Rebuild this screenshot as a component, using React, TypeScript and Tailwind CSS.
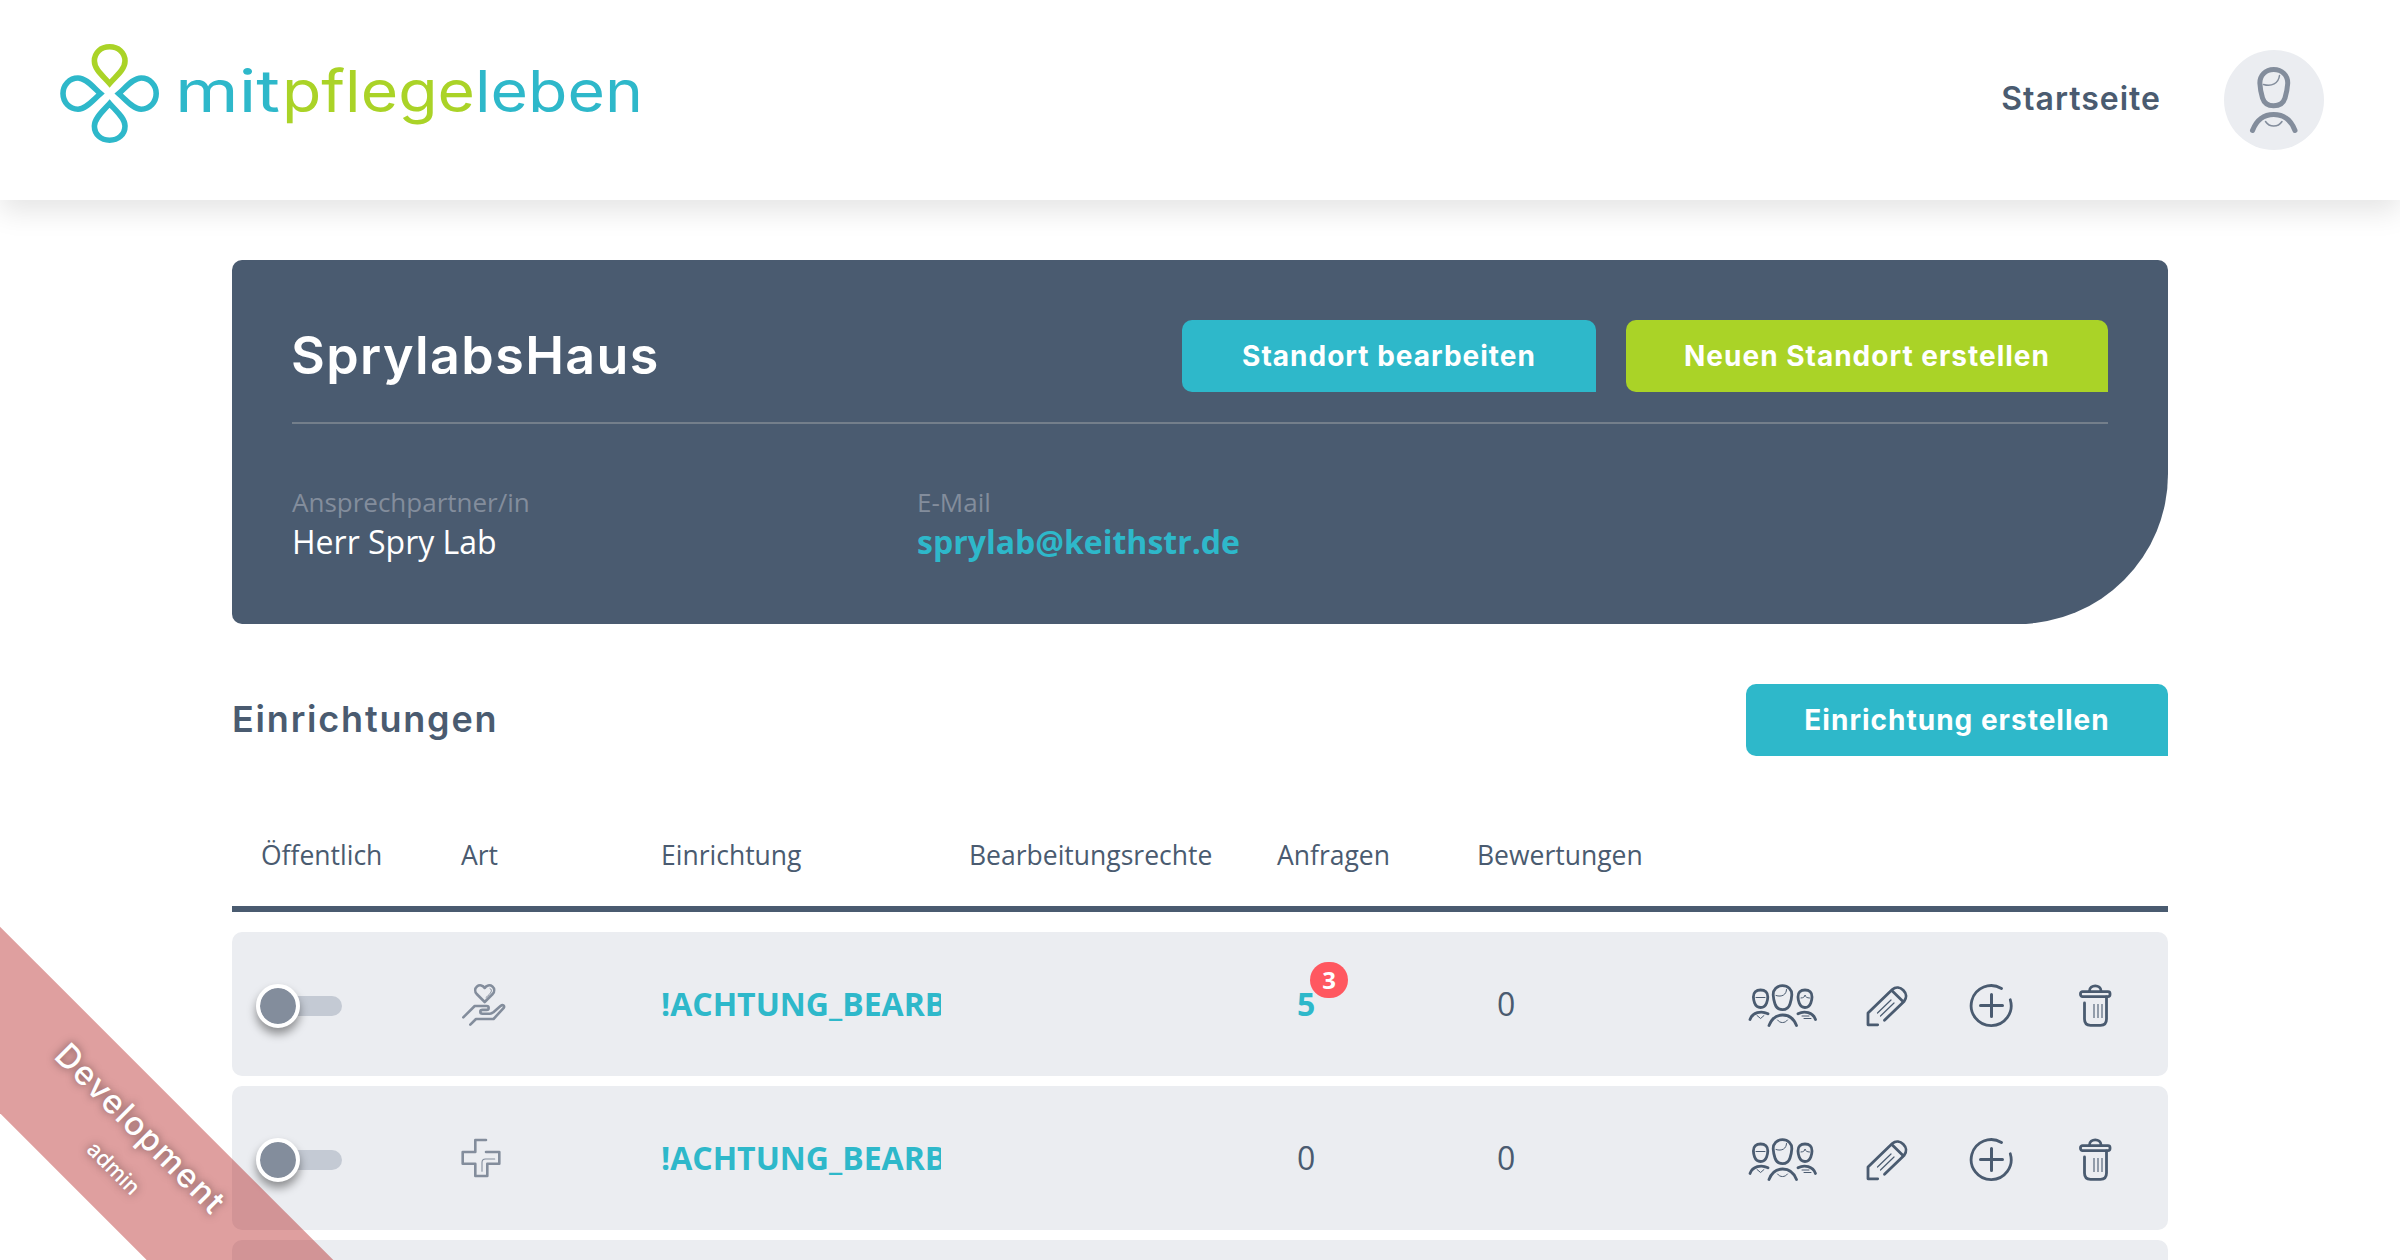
import React from "react";

const NAV = "#4a5b70";
const GREY = "#838d9c";
const TEAL = "#2eb8ca";
const LIME = "#aad327";

function Logo() {
  return (
    <svg width="600" height="110" viewBox="60 40 600 110" className="block">
      <g fill="none" strokeWidth="5.6" strokeLinejoin="miter">
        <path
          stroke={LIME}
          d="M109.6 83.5 C103 76 94.400 69.500 94.400 61 C94.400 52.500 101 46.800 109.600 46.800 C118.200 46.800 125 52.500 125 61 C125 69.500 116 76 109.600 83.500 Z"
        />
        <path
          stroke={TEAL}
          d="M109.6 103.600 C103 111 94.400 118 94.400 126 C94.400 134.500 101 140.200 109.600 140.200 C118.200 140.200 125 134.500 125 126 C125 118 116 111 109.600 103.600 Z"
        />
        <path
          stroke={TEAL}
          d="M100.500 93.600 C93 87 86 78 78 78 C69.500 78 63 85 63 93.600 C63 102.200 69.500 109.200 78 109.200 C86 109.200 93 100.200 100.500 93.600 Z"
        />
        <path
          stroke={TEAL}
          d="M118.700 93.600 C126.200 87 133.200 78 141.200 78 C149.700 78 156.200 85 156.200 93.600 C156.200 102.200 149.700 109.200 141.200 109.200 C133.200 109.200 126.200 100.200 118.700 93.600 Z"
        />
      </g>
      <g fontFamily="Inter, sans-serif" fontSize="58" fontWeight="400">
        <text x="175" y="111.500" textLength="105" lengthAdjust="spacingAndGlyphs" fill={TEAL}>mit</text>
        <text x="282" y="111.500" textLength="193" lengthAdjust="spacingAndGlyphs" fill={LIME}>pflege</text>
        <text x="475" y="111.500" textLength="168" lengthAdjust="spacingAndGlyphs" fill={TEAL}>leben</text>
      </g>
    </svg>
  );
}

function AvatarIcon() {
  return (
    <svg width="100" height="100" viewBox="0 0 100 100" fill="none" stroke={GREY} strokeLinecap="round">
      <g strokeWidth="5">
        <path d="M49.700 19.500 C58 19.500 64 25.500 63.700 33.500 C63.400 39 62.300 43.500 61 48 C59.300 53.500 55.500 55.800 49.700 55.800 C44 55.800 40.200 53.500 38.500 48 C37.200 43.500 36.100 39 35.900 33.500 C35.600 25.500 41.500 19.500 49.700 19.500 Z" />
        <path d="M28.500 80.500 C32 71.500 39 64.500 49.700 64.500 C60.500 64.500 67.500 71.500 71 80.500" />
      </g>
      <path strokeWidth="1.500" d="M39.500 34.500 C47.500 37 54.500 33.500 55.500 25.500" />
      <path strokeWidth="1.500" d="M41.500 71.500 C45.500 77.500 54 77.500 58 71.500" />
    </svg>
  );
}

function CareHandIcon() {
  return (
    <svg width="46" height="46" viewBox="0 0 46 46" fill="none" stroke={GREY} strokeLinecap="round" strokeLinejoin="round">
      <g strokeWidth="2.600">
        <path d="M23.700 21 L15.700 13 C13.600 10.500 13.800 7.300 16 5.400 C18.500 3.400 22 4.200 23.700 7 C25.400 4.200 28.900 3.400 31.400 5.400 C33.600 7.300 33.800 10.500 31.700 13 Z" />
        <path d="M2.300 36.300 L13.700 25 H25.700 C28.300 25 28.300 28.900 25.700 28.900 H21.500 C18.600 28.900 18.600 32.800 21.500 32.800 H29 C30.800 32.800 31.500 32 32.700 31 L39.500 25 C42 23 44.300 25 42.500 27.200 L32.500 38 H15 L9.300 43.700" />
      </g>
      <path strokeWidth="1" d="M29 7.500 C32 9 30.500 12 25 16.500" />
    </svg>
  );
}

function CrossIcon() {
  return (
    <svg width="46" height="46" viewBox="0 0 46 46" fill="none" stroke={GREY} strokeLinecap="round" strokeLinejoin="round">
      <path strokeWidth="2.600" d="M25 5 H14.300 V17 H1.700 V28.700 H14.300 V41 H26.300 V28.700 H38.300 V17 H25" />
      <path strokeWidth="1.100" d="M33.700 24 H24.500 Q21 24 21 27.500 V36.300" />
    </svg>
  );
}

function GroupIcon() {
  return (
    <svg width="70" height="46" viewBox="0 0 70 46" fill="none" stroke={NAV} strokeLinecap="round" strokeLinejoin="round">
      <g strokeWidth="2.800">
        <path d="M34.500 2.700 C40 2.700 44 6.500 43.800 12 C43.600 15.500 43 18 42 21 C40.800 24.800 38.500 26.700 34.500 26.700 C30.500 26.700 28.200 24.800 27 21 C26 18 25.400 15.500 25.200 12 C25 6.500 29 2.700 34.500 2.700 Z" />
        <path d="M21 42.500 C23.500 36 28 32 34.700 32 C41.500 32 46 36 48.500 42.500" />
        <path d="M12.600 7 C17 7 20 9.500 19.800 14 C19.700 16.500 19.300 18.200 18.600 20 C17.500 23 15.800 24.500 12.600 24.500 C9.400 24.500 7.700 23 6.600 20 C5.900 18.200 5.500 16.500 5.400 14 C5.200 9.500 8.200 7 12.600 7 Z" />
        <path d="M57 7 C61.400 7 64.200 9.500 64 14 C63.900 16.500 63.500 18.200 62.800 20 C61.700 23 60.200 24.500 57 24.500 C53.800 24.500 52.300 23 51.200 20 C50.500 18.200 50.100 16.500 50 14 C49.800 9.500 52.600 7 57 7 Z" />
        <path d="M2 36.500 C4.500 29.500 13 27.300 20 30.800" />
        <path d="M50 30.800 C56.500 27.300 65 29.500 67.500 36.500" />
      </g>
      <g strokeWidth="1">
        <path d="M28 12.500 C34 14.500 38.500 11.500 38.500 6.500 M29.500 37 C32 40.500 37 40.500 39.500 37" />
        <path d="M8 14.500 H17 M9 32.500 L12.600 35.500 L16 32.500" />
        <path d="M53 15 C55.500 15 57 13.500 57 12 C57.500 14 59 15 61.500 15 M54 33 H61 M56 35.500 H63" />
      </g>
    </svg>
  );
}

function PencilIcon() {
  return (
    <svg width="46" height="46" viewBox="0 0 46 46" fill="none" stroke={NAV} strokeLinecap="round" strokeLinejoin="round">
      <g strokeWidth="2.800">
        <path d="M12.700 41.800 H3 V30 L27.300 6.500 C34.500 0.500 45.500 10.500 39 18.500 L19.500 37.200" />
        <path d="M27.300 8 L37.500 18" />
      </g>
      <path strokeWidth="1.200" d="M12.500 30 L26 17 M15.500 33 L29 20" />
    </svg>
  );
}

function PlusIcon() {
  return (
    <svg width="46" height="46" viewBox="0 0 46 46" fill="none" stroke={NAV} strokeLinecap="round">
      <path strokeWidth="2.800" d="M32.500 5.500 A20 20 0 1 0 41.300 16.800" />
      <path strokeWidth="3" d="M22.500 11.500 V33.500 M11.500 22.500 H33.500" />
    </svg>
  );
}

function TrashIcon() {
  return (
    <svg width="46" height="46" viewBox="0 0 46 46" fill="none" stroke={NAV} strokeLinecap="round" strokeLinejoin="round">
      <g strokeWidth="2.800">
        <rect x="4.500" y="8.600" width="29.500" height="5" rx="2" />
        <path d="M13.500 8 C13.500 1.200 25 1.200 25 8" />
        <path d="M8.500 20 V36 Q8.500 42.300 14.500 42.300 H24.500 Q30.500 42.300 30.500 36 V14" />
      </g>
      <path strokeWidth="1.100" strokeLinecap="butt" d="M18 21 V35 M22 21 V35 M26 21 V35" />
    </svg>
  );
}

function Button({ tone, spacing, children }: { tone: "teal" | "lime"; spacing: string; children: React.ReactNode }) {
  return (
    <button
      className={`flex h-[72px] items-center justify-center rounded-[10px] rounded-br-none font-[Inter,sans-serif] text-[28px] font-bold tracking-[1px] whitespace-nowrap text-white ${
        tone === "teal" ? "bg-[#2eb8ca]" : "bg-[#aad327]"
      } ${spacing}`}
    >
      {children}
    </button>
  );
}

function Toggle() {
  return (
    <div className="relative flex h-11 w-[86px] items-center">
      <div className="ml-2 h-5 w-[78px] rounded-full bg-[#c4cad4]" />
      <div className="absolute top-0 left-0 size-11 rounded-full border-4 border-white bg-[#838d9c] bg-clip-padding shadow-[0_6px_10px_rgba(0,0,0,0.4)]" />
    </div>
  );
}

const GRID = "grid grid-cols-[200px_200px_308px_308px_200px_200px_1fr] pl-[29px]";

const COLUMNS = ["Öffentlich", "Art", "Einrichtung", "Bearbeitungsrechte", "Anfragen", "Bewertungen"];

type Facility = { kind: "care" | "medical"; name: string; requests: number; unread?: number; ratings: number };

const FACILITIES: Facility[] = [
  { kind: "care", name: "!ACHTUNG_BEARBEITEN", requests: 5, unread: 3, ratings: 0 },
  { kind: "medical", name: "!ACHTUNG_BEARBEITEN", requests: 0, ratings: 0 },
];

function FacilityRow({ item }: { item: Facility }) {
  return (
    <div className={`${GRID} h-[144px] items-center rounded-[10px] bg-[#ebedf1] text-[32px] text-[#4a5b70]`}>
      <div className="-ml-[5px] pt-1">
        <Toggle />
      </div>
      <div>{item.kind === "care" ? <CareHandIcon /> : <CrossIcon />}</div>
      <div className="w-[280px] overflow-hidden font-bold whitespace-nowrap text-[#2eb8ca]">{item.name}</div>
      <div />
      <div className="pl-5">
        {item.unread ? (
          <span className="relative font-bold text-[#2eb8ca]">
            {item.requests}
            <span className="absolute -top-[20px] left-[13px] flex h-9 w-[38px] items-center justify-center rounded-full bg-[#ff5860] text-2xl text-white">
              {item.unread}
            </span>
          </span>
        ) : (
          item.requests
        )}
      </div>
      <div className="pl-5">{item.ratings}</div>
      <div className="flex items-center pt-[3px] pl-[71px]">
        <GroupIcon />
        <div className="ml-[47px]"><PencilIcon /></div>
        <div className="ml-[58px]"><PlusIcon /></div>
        <div className="ml-[61px]"><TrashIcon /></div>
      </div>
    </div>
  );
}

export default function App() {
  return (
    <div className="relative h-[1260px] w-[2400px] overflow-hidden bg-white font-['Open_Sans',sans-serif] text-[#4a5b70]">
      <header className="flex h-[200px] items-center justify-between bg-white pr-[76px] pl-[60px] shadow-[0_12px_26px_rgba(0,0,0,0.1)]">
        <div className="-mt-[10px]">
          <Logo />
        </div>
        <nav className="flex items-center gap-[63px]">
          <a className="-mt-[3px] font-[Inter,sans-serif] text-[32px] font-semibold tracking-[1px]">Startseite</a>
          <div className="size-[100px] rounded-full bg-[#ebedf1]">
            <AvatarIcon />
          </div>
        </nav>
      </header>

      <main className="mx-[232px] mt-[60px]">
        <section className="h-[364px] rounded-[10px] rounded-br-[150px] bg-[#4a5b70] px-[60px] pt-[60px]">
          <div className="flex h-[104px] items-start justify-between border-b-2 border-[#747f8b]">
            <h1 className="-ml-px font-[Inter,sans-serif] text-[52px] leading-[72px] font-semibold tracking-[1.4px] text-white">SprylabsHaus</h1>
            <div className="flex gap-[30px]">
              <Button tone="teal" spacing="w-[414px]">Standort bearbeiten</Button>
              <Button tone="lime" spacing="w-[482px]">Neuen Standort erstellen</Button>
            </div>
          </div>
          <dl className="flex pt-[58px]">
            <div className="w-[625px]">
              <dt className="text-[26px] leading-10 text-[#838d9c]">Ansprechpartner/in</dt>
              <dd className="text-[32px] leading-10 text-white">Herr Spry Lab</dd>
            </div>
            <div>
              <dt className="text-[26px] leading-10 text-[#838d9c]">E-Mail</dt>
              <dd className="text-[32px] leading-10 font-bold text-[#2eb8ca]">sprylab@keithstr.de</dd>
            </div>
          </dl>
        </section>

        <div className="mt-[60px] flex items-center justify-between">
          <h2 className="-mt-[3px] font-[Inter,sans-serif] text-[36px] font-semibold tracking-[1.8px]">Einrichtungen</h2>
          <Button tone="teal" spacing="w-[422px]">Einrichtung erstellen</Button>
        </div>

        <div className={`${GRID} mt-[60px] h-24 items-center border-b-[6px] border-[#4a5b70] pb-[11px] text-[26.5px]`}>
          {COLUMNS.map((c) => (
            <div key={c}>{c}</div>
          ))}
        </div>

        <div className="mt-5 flex flex-col gap-[10px]">
          {FACILITIES.map((f, i) => (
            <FacilityRow key={i} item={f} />
          ))}
          <div className="h-[144px] rounded-[10px] bg-[#ebedf1]" />
        </div>
      </main>

      <div className="absolute top-[1080px] left-[-274px] flex h-[132px] w-[800px] rotate-45 flex-col items-center bg-[#aa0000]/[0.376] font-[Inter,sans-serif] text-white [text-shadow:0_0_8px_rgba(0,0,0,0.5)]">
        <div className="mt-[22px] -ml-1 text-[33px] leading-[42px] font-medium tracking-[1.5px]">Development</div>
        <div className="mt-[10px] ml-[14px] text-[22px] leading-8 font-medium">admin</div>
      </div>
    </div>
  );
}
